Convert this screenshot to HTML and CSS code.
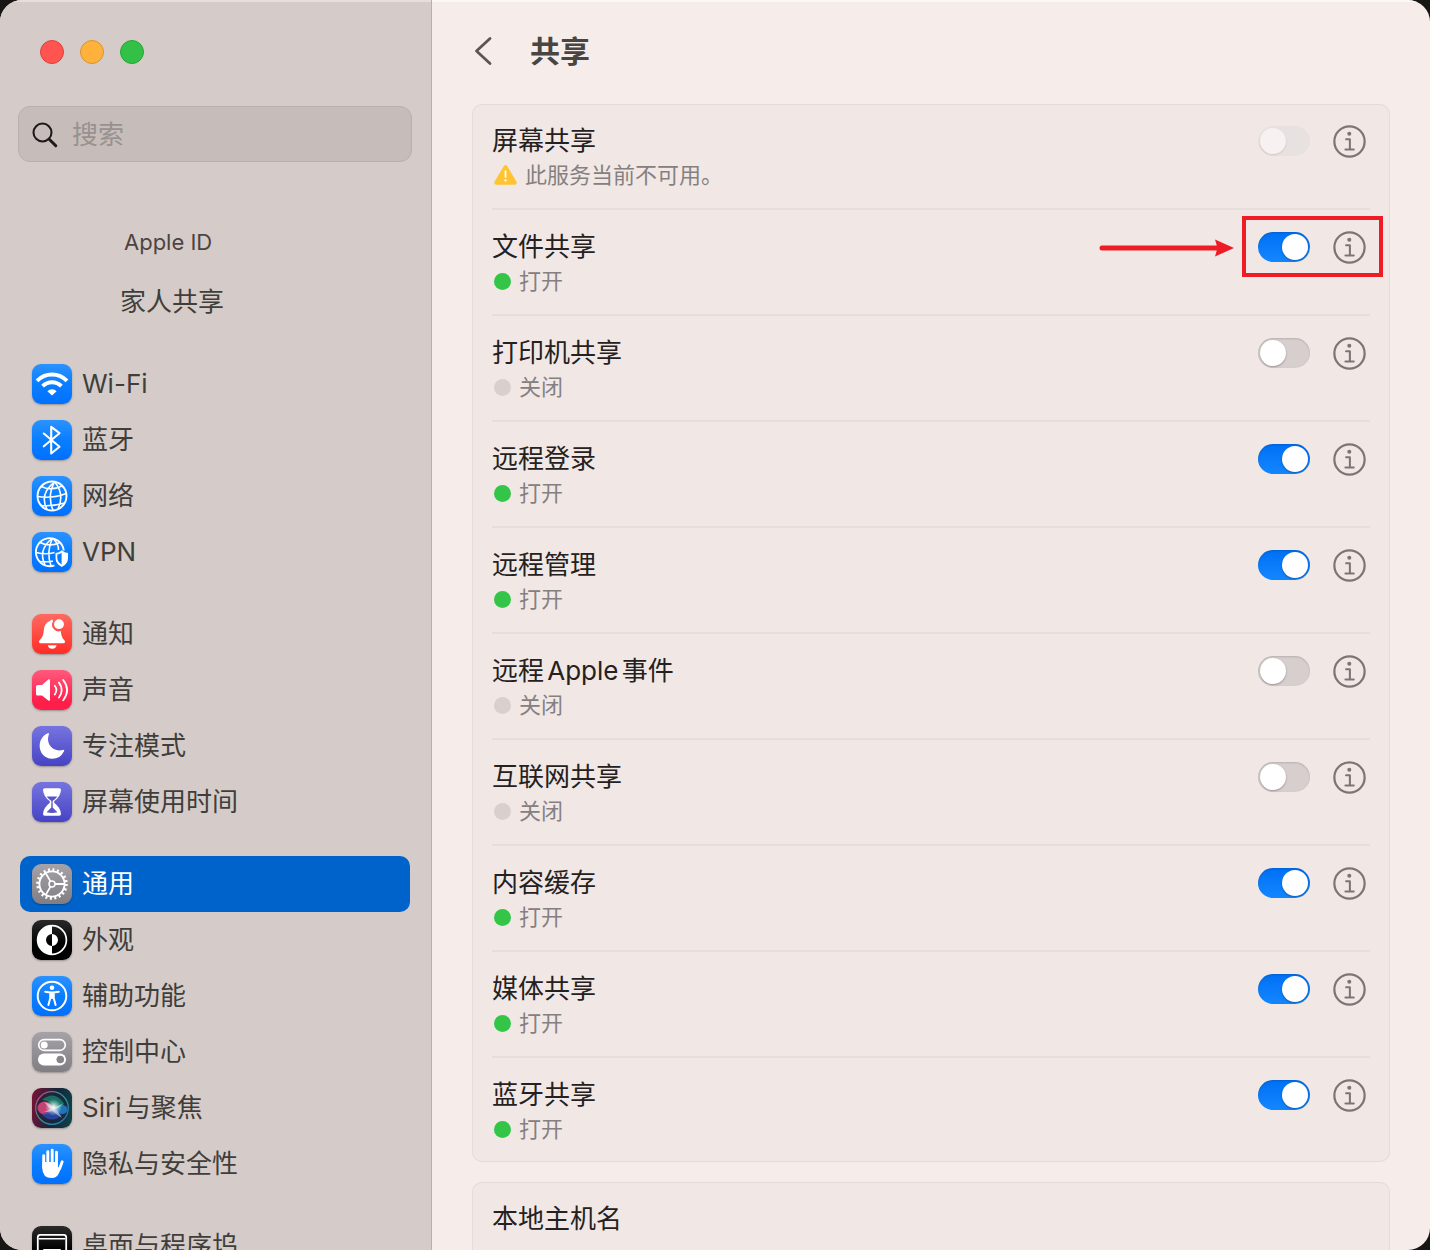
FILE: index.html
```
<!DOCTYPE html>
<html lang="zh-CN">
<head>
  <meta charset="UTF-8">
  <title>共享</title>
  <meta name="viewport" content="width=device-width, initial-scale=1">
  <link rel="stylesheet" href="styles.css">
</head>
<body>

  <svg class="defs" width="0" height="0" aria-hidden="true">
    <symbol id="info" viewBox="0 0 34 34">
      <circle cx="17" cy="17" r="15.6" fill="none" stroke="currentColor" stroke-width="2.3"/>
      <circle cx="16.8" cy="9" r="2.1" fill="currentColor"/>
      <path d="M13.5 14.6H17.4V25M12.8 25.3H21.4" fill="none" stroke="currentColor" stroke-width="2.1" stroke-linecap="round" stroke-linejoin="round"/>
    </symbol>
  </svg>

  <div class="window">
    <aside class="sidebar">
      <div class="lights">
        <button class="light red" aria-label="关闭"></button>
        <button class="light yellow" aria-label="最小化"></button>
        <button class="light green" aria-label="缩放"></button>
      </div>

      <div class="search">
        <svg class="search-icon" viewBox="0 0 26 26"><circle cx="10.5" cy="10.5" r="9" fill="none" stroke="#1d1b1a" stroke-width="2.1"/><path d="M17.2 17.2L23.8 23.8" stroke="#1d1b1a" stroke-width="3" stroke-linecap="round"/></svg>
        <input type="text" placeholder="搜索" aria-label="搜索">
      </div>

      <div class="account">
        <a class="apple-id" href="#">Apple ID</a>
        <a class="family" href="#">家人共享</a>
      </div>

      <nav>
        <div class="group">
          <a class="item" href="#">
            <svg class="icon blue" viewBox="0 0 40 40"><g fill="none" stroke="#fff" stroke-width="3.8"><path d="M5 16.8a21 21 0 0 1 30 0"/><path d="M10.6 22.2a13.2 13.2 0 0 1 18.8 0"/></g><path d="M20 31.6l-4.6-4.4a6.3 6.3 0 0 1 9.2 0z" fill="#fff"/></svg>
            Wi-Fi
          </a>
          <a class="item" href="#">
            <svg class="icon blue" viewBox="0 0 40 40"><path d="M11.8 13.5L27.5 26.8L19.2 33.5V6.8L27.5 13.2L11.8 26.3" fill="none" stroke="#fff" stroke-width="2.1" stroke-linecap="round" stroke-linejoin="round"/></svg>
            蓝牙
          </a>
          <a class="item" href="#">
            <svg class="icon blue" viewBox="0 0 40 40"><g fill="none" stroke="#fff" stroke-width="1.6"><circle cx="20" cy="20" r="14.5" stroke-width="1.9"/><path d="M22.5 5.8Q7 18 15 33.6M22.5 5.8Q15 20 21 34.4M22.5 5.8Q33 18 26 33.2M9.3 10.5Q19 15.5 30 10M5.6 20.5Q20 23 34 17.5M9 29.5Q21 30.5 32.5 27"/></g></svg>
            网络
          </a>
          <a class="item" href="#">
            <svg class="icon blue" viewBox="0 0 40 40"><g fill="none" stroke="#fff" stroke-width="1.6"><path d="M22.5 33.4A14 14 0 1 1 31.8 18.5" stroke-width="1.9"/><path d="M20.5 6Q5.5 18 13 32.8M20.5 6Q14 20 19 34M20.5 6Q27 12 26.5 18M8 10.5Q18 15.5 28 10.5M4.2 20.5Q14 23 22.5 20.5M7.5 29.5Q15 30 21 29.2"/></g><path d="M29.8 18.2Q32.5 20.6 36 21V26Q36 32 29.8 35Q23.5 32 23.5 26V21Q27 20.6 29.8 18.2z" fill="#fff"/><path d="M29.6 20.8V32.5Q25.3 29.8 25.3 26V22.5Q27.5 22.2 29.6 20.8z" fill="#087bff"/></svg>
            VPN
          </a>
        </div>

        <div class="group">
          <a class="item" href="#">
            <svg class="icon red-icon" viewBox="0 0 40 40"><g fill="#fff"><path d="M20.5 5.4Q18.5 5.4 18 7Q12 9 11.8 16.5Q11.6 22.5 7.4 26.5Q6.2 29.3 8.5 29.3H31.5Q33.8 29.3 32.6 26.5Q29.2 23.5 28.8 17A6.7 6.7 0 0 1 21 7.2z"/><path d="M15.8 31.2H24.6Q23.8 34.8 20.2 34.8Q16.6 34.8 15.8 31.2z"/><circle cx="27" cy="10.2" r="4.9"/></g></svg>
            通知
          </a>
          <a class="item" href="#">
            <svg class="icon pink" viewBox="0 0 40 40"><path d="M5.5 15H10L16.3 9.6Q18 8.5 18 10.5V29.7Q18 31.6 16.3 30.4L10 25.4H5.5Q4 25.4 4 23.9V16.5Q4 15 5.5 15z" fill="#fff"/><g fill="none" stroke="#fff" stroke-width="1.8" stroke-linecap="round"><path d="M22.8 15.8Q26 20 22.8 24.6M27 12.6Q32.4 20 27 27.6M31.2 10Q39 20 31.2 30.3"/></g></svg>
            声音
          </a>
          <a class="item" href="#">
            <svg class="icon purple" viewBox="0 0 40 40"><path d="M15.8 7.2Q17.4 6.8 16.8 8.4Q14.6 15 18.5 20.3Q23 25.8 31 23.9Q32.9 23.4 32 25.2Q28.3 32.8 20.2 32.8Q13.5 32.6 9.7 27.2Q6.2 21.5 8.5 14.8Q10.6 9.4 15.8 7.2z" fill="#fff"/></svg>
            专注模式
          </a>
          <a class="item" href="#">
            <svg class="icon purple" viewBox="0 0 40 40"><path d="M12.8 6.3H27.2Q29 6.3 29 8Q28.5 14.5 22.4 19Q21.8 20 22.4 21Q28.5 25.5 29 32Q29 33.7 27.2 33.7H12.8Q11 33.7 11 32Q11.5 25.5 17.6 21Q18.2 20 17.6 19Q11.5 14.5 11 8Q11 6.3 12.8 6.3z" fill="#fff"/><path d="M14.6 14.4H25.4Q23.6 16.8 20.8 18.8Q20.3 20 20.7 21.5V25.5L25.4 30.2Q20 31.6 14.6 30.2L19.3 25.5V21.5Q19.7 20 19.2 18.8Q16.4 16.8 14.6 14.4z" fill="#5955cc"/></svg>
            屏幕使用时间
          </a>
        </div>

        <div class="group">
          <a class="item active" href="#" aria-current="page">
            <svg class="icon gray" viewBox="0 0 40 40"><g fill="none" stroke="#fff"><circle cx="20" cy="20" r="14.4" stroke-width="2.8" stroke-dasharray="2 2.524"/><circle cx="20" cy="20" r="12.6" stroke-width="1.9"/><circle cx="20" cy="20" r="3" stroke-width="1.5"/><path d="M23 20H32.6M18.5 17.4L13.7 9.1M18.5 22.6L13.7 30.9" stroke-width="1.8"/></g></svg>
            通用
          </a>
          <a class="item" href="#">
            <svg class="icon black" viewBox="0 0 40 40"><circle cx="20" cy="20" r="14.4" fill="none" stroke="#fff" stroke-width="1.7"/><path d="M20 5.6A14.4 14.4 0 0 0 20 34.4V26A6 6 0 0 1 20 14zM20 14A6 6 0 0 1 20 26z" fill="#fff"/></svg>
            外观
          </a>
          <a class="item" href="#">
            <svg class="icon blue" viewBox="0 0 40 40"><circle cx="20" cy="20" r="14.3" fill="none" stroke="#fff" stroke-width="2"/><circle cx="20" cy="11.8" r="2.3" fill="#fff"/><path d="M13.2 15.7Q20 17.2 26.8 15.7M20 17V22M18.2 17.5L18.3 22L16.4 29M21.8 17.5L21.7 22L23.6 29" fill="none" stroke="#fff" stroke-width="2" stroke-linecap="round" stroke-linejoin="round"/></svg>
            辅助功能
          </a>
          <a class="item" href="#">
            <svg class="icon gray" viewBox="0 0 40 40"><rect x="6.7" y="7.7" width="26.6" height="10.6" rx="5.3" fill="none" stroke="#fff" stroke-width="1.7"/><circle cx="12.2" cy="13" r="3.5" fill="#fff"/><rect x="6" y="21.6" width="28" height="11.8" rx="5.9" fill="#fff"/><circle cx="28.3" cy="27.5" r="3.8" fill="#88868a"/></svg>
            控制中心
          </a>
          <a class="item" href="#">
            <svg class="icon siri" viewBox="0 0 40 40">
              <defs>
                <radialGradient id="flash"><stop offset="0" stop-color="#fff"/><stop offset=".3" stop-color="#fff" stop-opacity=".7"/><stop offset="1" stop-color="#9ff" stop-opacity="0"/></radialGradient>
                <linearGradient id="ring" x2="1" y2="1"><stop offset="0" stop-color="#d83a6c"/><stop offset=".5" stop-color="#2c9d92"/><stop offset="1" stop-color="#2a6fc4"/></linearGradient>
              </defs>
              <circle cx="20" cy="20" r="16.3" fill="#16283f" fill-opacity=".6" stroke="url(#ring)" stroke-width="1.2"/>
              <path d="M10 12Q22 2 31 14Q34 20 22 20Q17 12 10 12z" fill="#1d8d72" opacity=".7"/>
              <ellipse cx="12.5" cy="20" rx="7" ry="6.5" fill="#e0467a" opacity=".85"/>
              <ellipse cx="30" cy="21.5" rx="5.5" ry="4.5" fill="#2586d8" opacity=".8"/>
              <path d="M10 27Q20 36 30 27Q24 23 20 21Q15 24 10 27z" fill="#304fc0" opacity=".7"/>
              <circle cx="21.5" cy="19.5" r="8.5" fill="url(#flash)"/>
              <path d="M12 14Q22 15 30 30Q20 24 12 14zM12 24Q20 21 32 15Q22 25 12 24z" fill="#fff" opacity=".45"/>
            </svg>
            Siri与聚焦
          </a>
          <a class="item" href="#">
            <svg class="icon blue" viewBox="0 0 40 40"><g fill="none" stroke="#fff" stroke-width="2.9" stroke-linecap="round"><path d="M11.7 11.6V24M15.8 7.7V22M20.2 6.3V22M24.5 8.3V22M30.2 17.8L27.5 25"/></g><path d="M10.3 18H26V23.5L29 22.5L27.5 28Q25.3 34 19.8 34Q10.3 34 10.3 24z" fill="#fff"/></svg>
            隐私与安全性
          </a>
        </div>

        <div class="group">
          <a class="item" href="#">
            <svg class="icon black" viewBox="0 0 40 40"><rect x="5.8" y="8.8" width="28.4" height="23" rx="2.5" fill="none" stroke="#fff" stroke-width="1.8"/><path d="M7 12.7H33" stroke="#fff" stroke-width="1.4"/><rect x="11" y="23" width="18" height="5" rx="1" fill="#fff"/></svg>
            桌面与程序坞
          </a>
        </div>
      </nav>
    </aside>

    <main class="content">
      <header class="header">
        <button class="back" aria-label="返回"><svg viewBox="0 0 18 30"><path d="M16 2.5L2.5 15L16 27.5" fill="none" stroke="#5d5553" stroke-width="2.8" stroke-linecap="round" stroke-linejoin="round"/></svg></button>
        <h1>共享</h1>
      </header>

      <section class="card">
        <div class="row">
          <div class="text">
            <label for="screen">屏幕共享</label>
            <p><svg class="warning" viewBox="0 0 24 22"><path d="M12 3L21.5 19H2.5z" fill="#ffc431" stroke="#ffc431" stroke-width="4.4" stroke-linejoin="round"/><path d="M12 7V13" stroke="#fff" stroke-width="1.8" stroke-linecap="round"/><circle cx="12" cy="16.7" r="1.2" fill="#fff"/></svg>此服务当前不可用。</p>
          </div>
          <div class="controls">
            <input type="checkbox" class="switch" id="screen" disabled>
            <button class="info" aria-label="屏幕共享信息"><svg><use href="#info"/></svg></button>
          </div>
        </div>
        <div class="row">
          <div class="text">
            <label for="file">文件共享</label>
            <p><span class="dot on"></span>打开</p>
          </div>
          <div class="controls">
            <input type="checkbox" class="switch" id="file" checked>
            <button class="info" aria-label="文件共享信息"><svg><use href="#info"/></svg></button>
            <svg class="arrow" viewBox="0 0 136 20"><path d="M3 10H120" stroke="#ee1c25" stroke-width="5" stroke-linecap="round"/><path d="M116 1.5L135 10L116 18.5L118.5 10z" fill="#ee1c25"/></svg>
            <div class="highlight"></div>
          </div>
        </div>
        <div class="row">
          <div class="text">
            <label for="printer">打印机共享</label>
            <p><span class="dot"></span>关闭</p>
          </div>
          <div class="controls">
            <input type="checkbox" class="switch" id="printer">
            <button class="info" aria-label="打印机共享信息"><svg><use href="#info"/></svg></button>
          </div>
        </div>
        <div class="row">
          <div class="text">
            <label for="login">远程登录</label>
            <p><span class="dot on"></span>打开</p>
          </div>
          <div class="controls">
            <input type="checkbox" class="switch" id="login" checked>
            <button class="info" aria-label="远程登录信息"><svg><use href="#info"/></svg></button>
          </div>
        </div>
        <div class="row">
          <div class="text">
            <label for="manage">远程管理</label>
            <p><span class="dot on"></span>打开</p>
          </div>
          <div class="controls">
            <input type="checkbox" class="switch" id="manage" checked>
            <button class="info" aria-label="远程管理信息"><svg><use href="#info"/></svg></button>
          </div>
        </div>
        <div class="row">
          <div class="text">
            <label for="events">远程Apple事件</label>
            <p><span class="dot"></span>关闭</p>
          </div>
          <div class="controls">
            <input type="checkbox" class="switch" id="events">
            <button class="info" aria-label="远程Apple事件信息"><svg><use href="#info"/></svg></button>
          </div>
        </div>
        <div class="row">
          <div class="text">
            <label for="internet">互联网共享</label>
            <p><span class="dot"></span>关闭</p>
          </div>
          <div class="controls">
            <input type="checkbox" class="switch" id="internet">
            <button class="info" aria-label="互联网共享信息"><svg><use href="#info"/></svg></button>
          </div>
        </div>
        <div class="row">
          <div class="text">
            <label for="cache">内容缓存</label>
            <p><span class="dot on"></span>打开</p>
          </div>
          <div class="controls">
            <input type="checkbox" class="switch" id="cache" checked>
            <button class="info" aria-label="内容缓存信息"><svg><use href="#info"/></svg></button>
          </div>
        </div>
        <div class="row">
          <div class="text">
            <label for="media">媒体共享</label>
            <p><span class="dot on"></span>打开</p>
          </div>
          <div class="controls">
            <input type="checkbox" class="switch" id="media" checked>
            <button class="info" aria-label="媒体共享信息"><svg><use href="#info"/></svg></button>
          </div>
        </div>
        <div class="row">
          <div class="text">
            <label for="bluetooth">蓝牙共享</label>
            <p><span class="dot on"></span>打开</p>
          </div>
          <div class="controls">
            <input type="checkbox" class="switch" id="bluetooth" checked>
            <button class="info" aria-label="蓝牙共享信息"><svg><use href="#info"/></svg></button>
          </div>
        </div>
      </section>

      <section class="card hostname">
        <div class="row">
          <h2>本地主机名</h2>
        </div>
      </section>
    </main>
  </div>

</body>
</html>
```
FILE: styles.css
```
* {
  box-sizing: border-box;
}

body {
  margin: 0;
  background: #171615;
  font-family: Inter, "Noto Sans CJK SC", sans-serif;
  font-size: 26px;
  line-height: 34px;
  text-autospace: normal;
  color: #242120;
}

button {
  padding: 0;
  border: none;
  background: none;
}

a {
  color: inherit;
  text-decoration: none;
}

.defs {
  position: absolute;
}

.window {
  display: flex;
  height: 100vh;
  border-radius: 22px;
  overflow: hidden;
  background: #f6edea;
}

/* sidebar */
.sidebar {
  flex: 0 0 432px;
  padding: 40px 21px 0 20px;
  background: #d5ccc9;
  border-right: 1px solid #b9afad;
  box-shadow: inset 0 2px 0 #e4dedc;
  overflow: hidden;
  color: #403e3b;
}

.lights {
  display: flex;
  gap: 16px;
  padding-left: 20px;
}

.light {
  width: 24px;
  height: 24px;
  border-radius: 50%;
}

.red {
  background: #ff5450;
  border: 1px solid #e0403d;
}

.yellow {
  background: #ffb23b;
  border: 1px solid #d99430;
}

.green {
  background: #32c146;
  border: 1px solid #28a536;
}

.search {
  display: flex;
  align-items: center;
  gap: 14px;
  height: 56px;
  margin: 42px -2px 0;
  padding: 1px 13px 0;
  background: #c6bdba;
  border: 1px solid #b9b0ad;
  border-radius: 12px;
}

.search-icon {
  flex: none;
  width: 26px;
  height: 26px;
}

.search input {
  flex: 1;
  min-width: 0;
  height: 36px;
  padding: 0;
  border: none;
  outline: none;
  background: none;
  font: inherit;
}

.search input::placeholder {
  color: #989190;
}

.account {
  display: flex;
  flex-direction: column;
  padding: 50px 0 24px 100px;
}

.apple-id {
  padding-left: 4px;
  font-size: 22px;
  line-height: 60px;
  color: #4d4442;
}

.family {
  line-height: 60px;
}

.group {
  margin-bottom: 26px;
}

.item {
  display: flex;
  align-items: center;
  gap: 10px;
  height: 56px;
  padding: 0 12px;
  border-radius: 10px;
  white-space: nowrap;
}

.item.active {
  background: #0063cc;
  color: #fff;
}

.icon {
  flex: none;
  width: 40px;
  height: 40px;
  border-radius: 9px;
  box-shadow: 0 1px 2px rgba(0, 0, 0, 0.3);
}

.blue {
  background: linear-gradient(#2b92ff, #0a7eff 50%, #0070ff);
}

.red-icon {
  background: linear-gradient(#ff6961, #ff2d26);
}

.pink {
  background: linear-gradient(#ff5a7c, #ff1e4a 80%);
}

.purple {
  background: linear-gradient(#7774e0, #4643c4);
}

.gray {
  background: linear-gradient(#a5a3a7, #807e83);
}

.black {
  background: linear-gradient(#2a2a2a, #000 60%);
}

.siri {
  background: linear-gradient(100deg, #7c1235, #14263b 55%, #10454b);
}

/* content */
.content {
  flex: 1;
  min-width: 0;
  padding: 0 40px;
  box-shadow: inset 0 2px 0 #fbf8f7;
  overflow: hidden;
}

.header {
  display: flex;
  align-items: center;
  gap: 38px;
  height: 104px;
  padding: 0 2px 2px;
}

.back svg {
  display: block;
  width: 18px;
  height: 30px;
}

h1 {
  margin: 0;
  font-size: 30px;
  line-height: 40px;
  color: #494542;
}

h2 {
  margin: 0;
  font-size: 26px;
  font-weight: 400;
  line-height: 36px;
}

.card {
  margin-bottom: 20px;
  padding: 0 20px;
  background: #f1e8e6;
  border-radius: 10px;
  box-shadow: inset 0 0 0 1px #e4dcda;
}

.hostname {
  padding-bottom: 34px;
}

.row {
  display: flex;
  justify-content: space-between;
  padding: 19px 4px 17px 0;
  border-bottom: 2px solid #e6dedc;
}

.row:last-child {
  border-bottom: none;
}

.text {
  display: flex;
  flex-direction: column;
}

.text label {
  line-height: 36px;
}

.text p {
  display: flex;
  align-items: center;
  margin: 0;
  padding-left: 2px;
  font-size: 22px;
  line-height: 32px;
  color: #858080;
}

.warning {
  width: 23px;
  height: 22px;
  margin-right: 8px;
}

.dot {
  width: 17px;
  height: 17px;
  margin-right: 8px;
  border-radius: 50%;
  background: #d9d0ce;
}

.dot.on {
  background: #34c548;
}

.controls {
  position: relative;
  display: flex;
  align-items: center;
  gap: 23px;
  height: 36px;
}

.switch {
  appearance: none;
  width: 52px;
  height: 30px;
  margin: 0;
  padding: 2px;
  border-radius: 15px;
  background: #d7cfcd;
  box-shadow: inset 0 1px 2px rgba(0, 0, 0, 0.15);
}

.switch::before {
  content: "";
  display: block;
  width: 26px;
  height: 26px;
  border-radius: 50%;
  background: #fff;
  box-shadow: 0 1px 2px rgba(0, 0, 0, 0.3);
}

.switch:checked {
  background: linear-gradient(#0070f5, #1486ff);
}

.switch:checked::before {
  margin-left: 22px;
}

.switch:disabled {
  background: #e7e2df;
  box-shadow: none;
}

.switch:disabled::before {
  background: #f7f2f1;
  box-shadow: 0 1px 2px rgba(0, 0, 0, 0.12);
}

.info {
  width: 33px;
  height: 34px;
  color: #7b7573;
}

.info svg {
  display: block;
  width: 33px;
  height: 33px;
}

/* callout around the file sharing switch */
.highlight {
  position: absolute;
  top: -13px;
  left: -16px;
  right: -17px;
  height: 61px;
  border: 4px solid #ee1c25;
  pointer-events: none;
}

.arrow {
  position: absolute;
  top: 9px;
  right: 131px;
  width: 136px;
  height: 20px;
}
```
